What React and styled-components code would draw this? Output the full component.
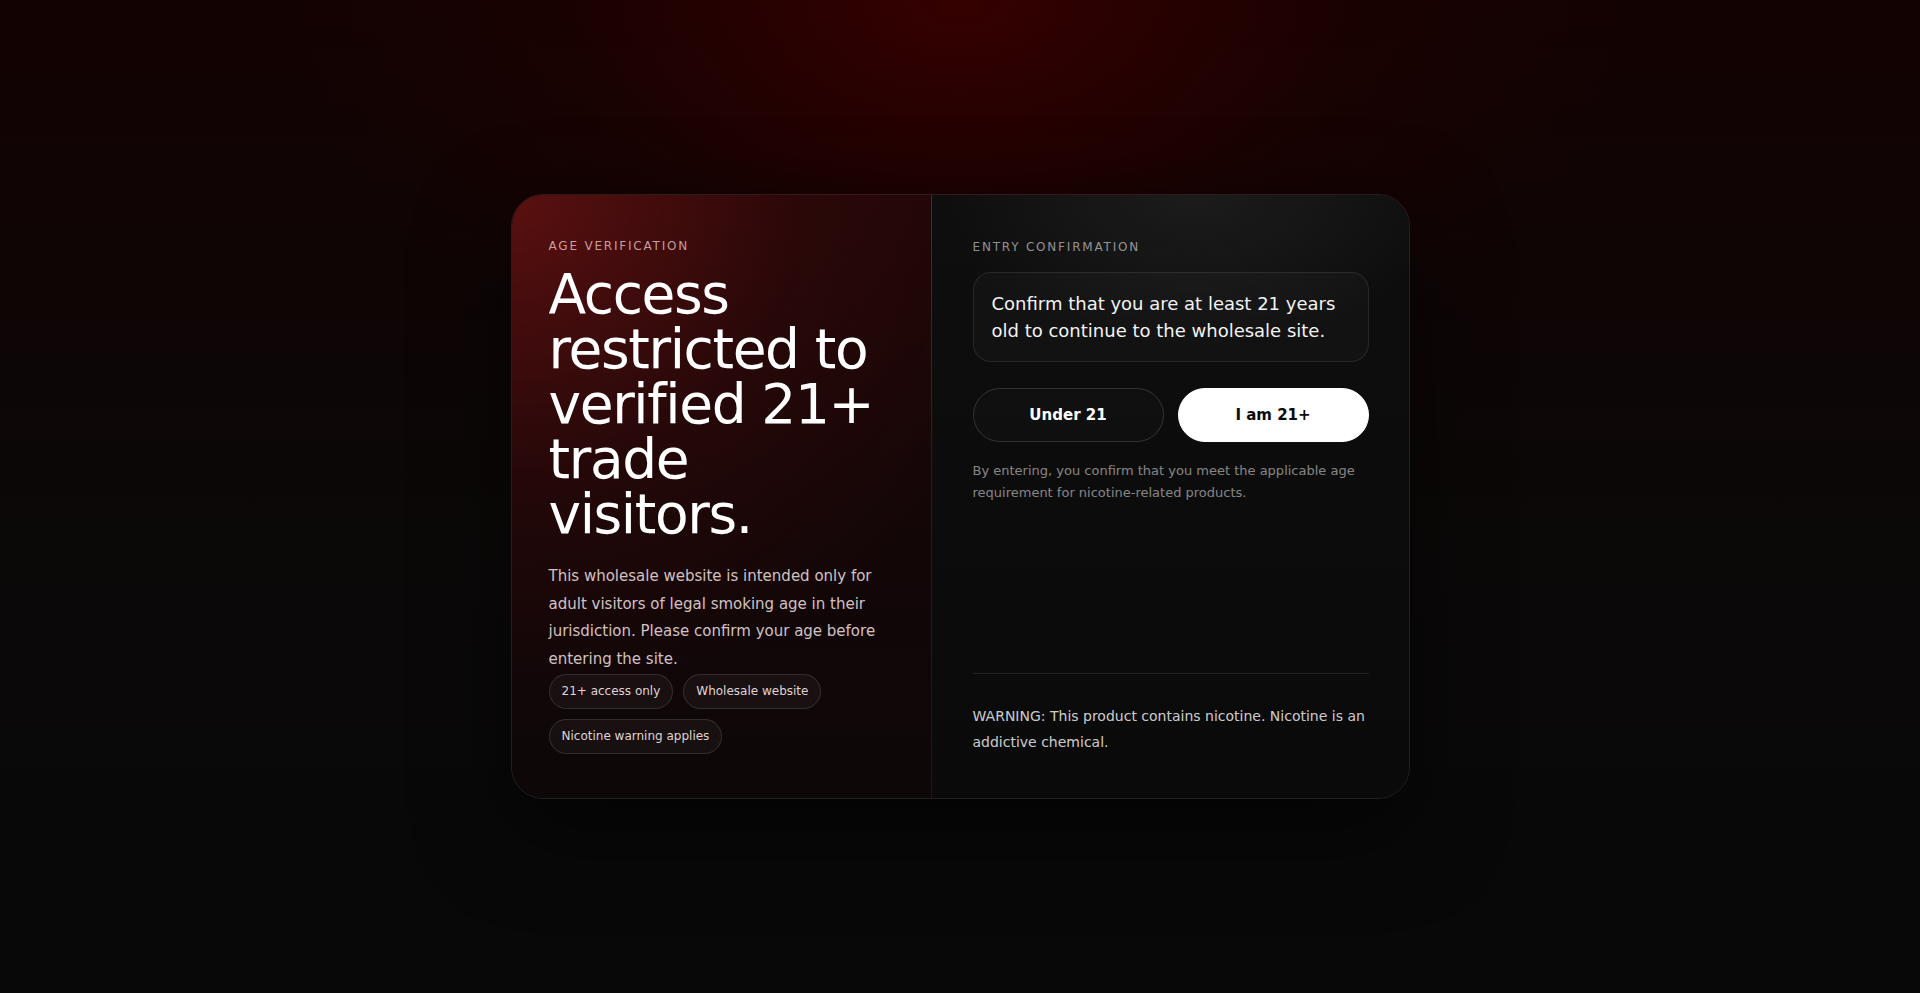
import React from "react";
import styled, { createGlobalStyle } from "styled-components";

const GlobalStyle = createGlobalStyle`
  * {
    box-sizing: border-box;
  }
  html, body {
    margin: 0;
    padding: 0;
    height: 100%;
  }
  body {
    font-family: "DejaVu Sans", "Noto Sans", sans-serif;
    background-color: #080808;
    color: #fff;
  }
`;

const Page = styled.div`
  min-height: 100vh;
  display: flex;
  align-items: center;
  justify-content: center;
  background:
    radial-gradient(ellipse 900px 560px at 50% 0%, rgba(62, 0, 0, 0.8), rgba(36, 0, 0, 0.35) 45%, transparent 75%),
    linear-gradient(180deg, #130202 0%, #0b0808 55%, #080808 100%);
`;

const Card = styled.section`
  width: 899px;
  display: grid;
  grid-template-columns: 420px 1fr;
  border: 1px solid rgba(255, 255, 255, 0.1);
  border-radius: 32px;
  overflow: hidden;
  box-shadow: 0 30px 90px rgba(0, 0, 0, 0.55);
`;

const IntroPanel = styled.div`
  display: flex;
  flex-direction: column;
  padding: 44px 37px;
  border-right: 1px solid rgba(255, 255, 255, 0.07);
  background:
    radial-gradient(circle at 0% 0%, rgba(130, 22, 22, 0.6), rgba(80, 12, 12, 0.25) 40%, transparent 70%),
    linear-gradient(180deg, #1e0607 0%, #140607 50%, #0d0708 100%);
`;

const ConfirmPanel = styled.div`
  display: flex;
  flex-direction: column;
  padding: 45px 40px 43px 41px;
  background:
    radial-gradient(ellipse 360px 220px at 55% 0%, rgba(255, 255, 255, 0.06), transparent 70%),
    linear-gradient(180deg, #0e0e0e 0%, #0a0a0a 100%);
`;

const Eyebrow = styled.div`
  font-size: 12px;
  line-height: 14.4px;
  letter-spacing: 0.15em;
  text-transform: uppercase;
  color: ${(p) => (p.$tone === "warm" ? "rgba(255, 214, 214, 0.72)" : "rgba(255, 255, 255, 0.55)")};
`;

const Heading = styled.h1`
  margin: 14px 0 0;
  font-size: 55px;
  line-height: 55px;
  font-weight: 400;
  letter-spacing: -0.025em;
  color: #fff;
`;

const Lead = styled.p`
  margin: 21px 0 0;
  font-size: 15px;
  line-height: 27.6px;
  color: rgba(255, 236, 236, 0.82);
`;

const Chips = styled.div`
  margin-top: 1px;
  display: flex;
  flex-wrap: wrap;
  gap: 10px;
`;

const Chip = styled.span`
  display: inline-block;
  padding: 9px 12px;
  font-size: 12px;
  line-height: 15px;
  color: rgba(255, 240, 240, 0.88);
  border: 1px solid rgba(255, 255, 255, 0.12);
  border-radius: 999px;
  background: rgba(255, 255, 255, 0.04);
`;

const Notice = styled.div`
  margin-top: 18px;
  padding: 17px 18px;
  font-size: 18px;
  line-height: 27px;
  color: #f2f2f2;
  border: 1px solid rgba(255, 255, 255, 0.09);
  border-radius: 18px;
  background: rgba(255, 255, 255, 0.025);
`;

const Actions = styled.div`
  margin-top: 26px;
  display: grid;
  grid-template-columns: 1fr 1fr;
  gap: 14px;
`;

const ChoiceButton = styled.button`
  height: 54px;
  border-radius: 999px;
  font-family: inherit;
  font-size: 15px;
  font-weight: 700;
  cursor: pointer;
  border: 1px solid ${(p) => (p.$primary ? "#fff" : "rgba(255, 255, 255, 0.14)")};
  background: ${(p) => (p.$primary ? "#fff" : "rgba(255, 255, 255, 0.015)")};
  color: ${(p) => (p.$primary ? "#0a0a0a" : "#fff")};
`;

const FinePrint = styled.p`
  margin: 18px 0 0;
  font-size: 13px;
  line-height: 21.5px;
  color: rgba(255, 255, 255, 0.5);
`;

const Warning = styled.p`
  margin: auto 0 0;
  padding-top: 29px;
  border-top: 1px solid rgba(255, 255, 255, 0.09);
  font-size: 14px;
  line-height: 26px;
  color: rgba(255, 255, 255, 0.8);
`;

export default function App() {
  return (
    <>
      <GlobalStyle />
      <Page>
        <Card>
          <IntroPanel>
            <Eyebrow $tone="warm">Age verification</Eyebrow>
            <Heading>Access restricted to verified 21+ trade visitors.</Heading>
            <Lead>
              This wholesale website is intended only for adult visitors of legal
              smoking age in their jurisdiction. Please confirm your age before
              entering the site.
            </Lead>
            <Chips>
              <Chip>21+ access only</Chip>
              <Chip>Wholesale website</Chip>
              <Chip>Nicotine warning applies</Chip>
            </Chips>
          </IntroPanel>
          <ConfirmPanel>
            <Eyebrow>Entry confirmation</Eyebrow>
            <Notice>
              Confirm that you are at least 21 years old to continue to the
              wholesale site.
            </Notice>
            <Actions>
              <ChoiceButton type="button">Under 21</ChoiceButton>
              <ChoiceButton type="button" $primary>
                I am 21+
              </ChoiceButton>
            </Actions>
            <FinePrint>
              By entering, you confirm that you meet the applicable age
              requirement for nicotine-related products.
            </FinePrint>
            <Warning>
              WARNING: This product contains nicotine. Nicotine is an addictive
              chemical.
            </Warning>
          </ConfirmPanel>
        </Card>
      </Page>
    </>
  );
}
